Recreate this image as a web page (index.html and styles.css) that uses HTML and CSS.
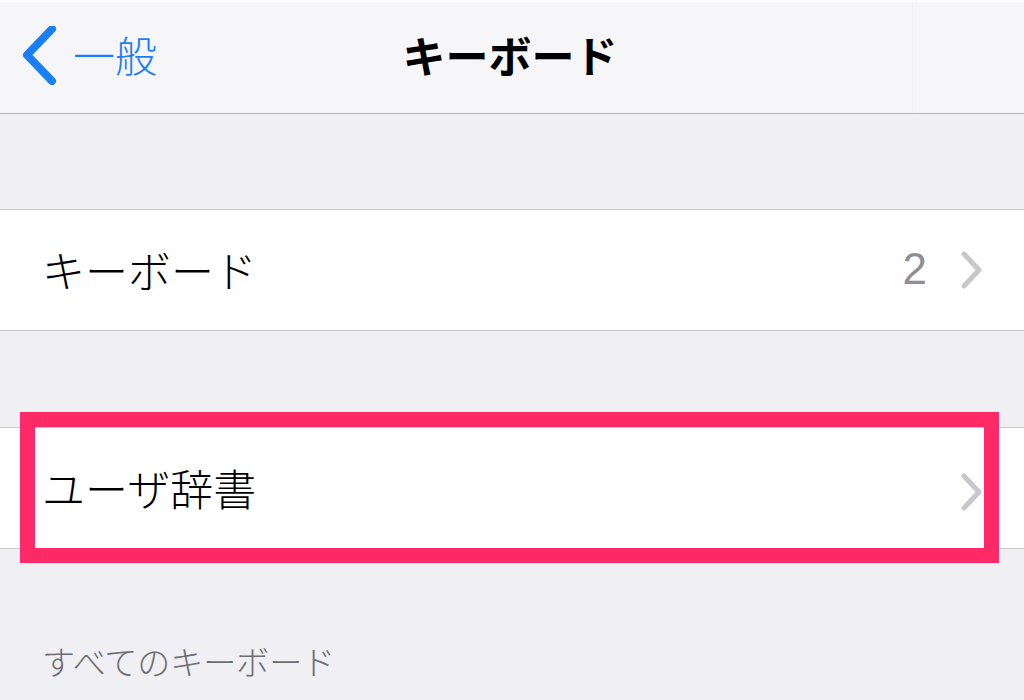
FILE: index.html
```html
<!DOCTYPE html>
<html lang="ja">
  <head>
    <meta charset="UTF-8" />
    <meta name="viewport" content="width=device-width, initial-scale=1.0" />
    <title>キーボード</title>
    <link rel="stylesheet" href="styles.css">
  </head>
  <body>
    <header class="navbar">
      <a class="back" href="#">
        <svg class="back-icon" width="40" height="60" viewBox="0 0 40 60">
          <polyline points="33,3 8,29 33,55" fill="none" stroke="#1a7ff5" stroke-width="8" stroke-linecap="round" stroke-linejoin="round" />
        </svg>
        <span>一般</span>
      </a>
      <h1 class="title">キーボード</h1>
      <div class="nav-side"></div>
    </header>

    <div class="gap gap-top"></div>

    <section class="group">
      <div class="row">
        <span class="label">キーボード</span>
        <span class="detail">2</span>
        <svg class="chev" width="24" height="40" viewBox="0 0 24 40">
          <polyline points="4,4 19,20 4,36" fill="none" stroke="#c7c7cc" stroke-width="5" stroke-linecap="round" stroke-linejoin="round" />
        </svg>
      </div>
    </section>

    <div class="gap gap-mid"></div>

    <section class="group highlighted">
      <div class="row">
        <span class="label">ユーザ辞書</span>
        <svg class="chev" width="24" height="40" viewBox="0 0 24 40">
          <polyline points="4,4 19,20 4,36" fill="none" stroke="#c7c7cc" stroke-width="5" stroke-linecap="round" stroke-linejoin="round" />
        </svg>
      </div>
      <!-- 赤枠 -->
      <div class="mark"></div>
    </section>

    <h2 class="section-title">すべてのキーボード</h2>
  </body>
</html>
```

FILE: styles.css
```css
      body {
        margin: 0;
        background-color: #efeff4;
        font-family: "Noto Sans CJK JP", "Noto Sans", sans-serif;
        overflow: hidden;
      }

      .navbar {
        height: 111px;
        border-top: 2px solid #fdfdfd;
        border-bottom: 1px solid #b2b2b2;
        background-color: #f6f6f8;
        display: flex;
        align-items: center;
        position: relative;
      }

      .back {
        display: flex;
        align-items: center;
        gap: 14px;
        padding-left: 19px;
        text-decoration: none;
        color: #1a7ff5;
        font-size: 42px;
        font-weight: 300;
        margin-top: -4px;
      }

      .back span {
        margin-top: -4px;
      }

      .title {
        position: absolute;
        left: 0;
        right: 0;
        top: 0;
        bottom: 0;
        margin: 0;
        display: flex;
        justify-content: center;
        align-items: center;
        font-size: 43px;
        font-weight: 700;
        color: #000;
        padding-right: 4px;
        padding-bottom: 8px;
        pointer-events: none;
      }

      .nav-side {
        margin-left: auto;
        width: 111px;
        height: 100%;
        border-left: 1px solid #efeff1;
      }

      .gap-top {
        height: 95px;
      }

      .gap-mid {
        height: 96px;
      }

      .group {
        background-color: #fff;
        border-top: 1px solid #c8c7cc;
        border-bottom: 1px solid #c8c7cc;
      }

      .row {
        height: 120px;
        display: flex;
        align-items: center;
        padding: 0 40px 0 42px;
        font-size: 43px;
        font-weight: 300;
        color: #000;
      }

      .label {
        margin-top: -2px;
      }

      .detail {
        margin-left: auto;
        color: #8e8e93;
        font-size: 44px;
        font-weight: 400;
        margin-right: 33px;
        margin-top: -2px;
        font-family: "Liberation Sans", "Noto Sans", sans-serif;
      }

      .row .chev {
        flex: none;
      }

      .highlighted .row .chev {
        margin-left: auto;
        margin-top: 8px;
      }

      .highlighted {
        position: relative;
      }

      .mark {
        position: absolute;
        top: -16px;
        left: 20px;
        right: 25px;
        bottom: -15px;
        border: 15px solid #fe2a68;
      }

      .section-title {
        margin: 0;
        padding: 88px 0 0 42px;
        font-size: 33px;
        font-weight: 300;
        color: #6d6d72;
      }
```
